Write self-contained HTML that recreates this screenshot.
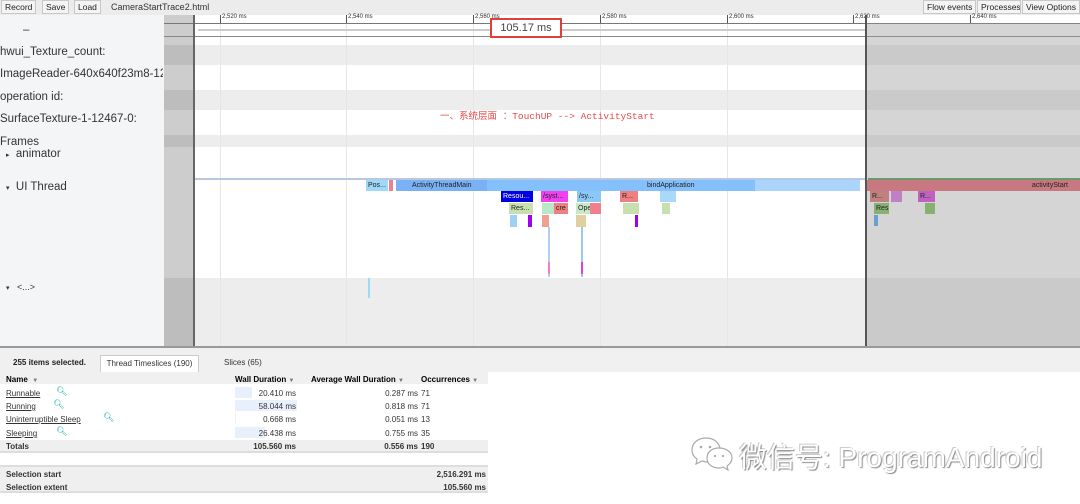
<!DOCTYPE html>
<html><head><meta charset="utf-8"><style>
*{margin:0;padding:0;box-sizing:border-box}
body{width:1080px;height:504px;overflow:hidden;background:#fff;font-family:"Liberation Sans",sans-serif;position:relative}
.a{position:absolute}
.btn{position:absolute;top:0;height:14px;border:1px solid #c8c8c8;background:#f4f4f4;font-size:8.5px;line-height:12px;padding:0 3px;color:#222;white-space:nowrap;overflow:hidden;text-align:center}
.lbl{position:absolute;left:0;font-size:11.5px;color:#333;white-space:nowrap}
.s{position:absolute;height:11px;font-size:7px;line-height:11px;color:#222;overflow:hidden;padding-left:2px;white-space:nowrap}
.v{position:absolute;width:2px}
.t{font-size:8px;color:#333;position:absolute}
.b{font-weight:bold}
</style></head><body>
<!-- toolbar -->
<div class="a" style="left:0;top:0;width:1080px;height:15px;background:#ececec"></div>
<div class="btn" style="left:1px">Record</div>
<div class="btn" style="left:42px">Save</div>
<div class="btn" style="left:74px">Load</div>
<div class="a" style="left:111px;top:2px;font-size:9px;color:#333">CameraStartTrace2.html</div>
<div class="btn" style="left:923px;width:53px">Flow events</div>
<div class="btn" style="left:977px;width:44px">Processes</div>
<div class="btn" style="left:1022px;width:58px">View Options</div>
<!-- left panel -->
<div class="a" style="left:0;top:15px;width:164px;height:332px;background:#f4f5f7"></div>
<div class="lbl" style="left:23px;top:24px">–</div>
<div class="lbl" style="top:46px">hwui_Texture_count:</div>
<div class="lbl" style="top:68px;width:163px;overflow:hidden">ImageReader-640x640f23m8-12</div>
<div class="lbl" style="top:91px">operation id:</div>
<div class="lbl" style="top:113px">SurfaceTexture-1-12467-0:</div>
<div class="lbl" style="top:136px">Frames</div>
<div class="lbl" style="left:6px;top:148px"><span style="font-size:7px">▸</span>&nbsp; animator</div>
<div class="lbl" style="left:6px;top:181px"><span style="font-size:7px">▾</span>&nbsp; UI Thread</div>
<div class="lbl" style="left:6px;top:282px;font-size:9px"><span style="font-size:7px">▾</span>&nbsp;&nbsp; &lt;...&gt;</div>
<!-- timeline bg -->
<div class="a" style="left:164px;top:15px;width:30px;height:332px;background:#cdcdcd"></div>
<div class="a" style="left:164px;top:278px;width:30px;height:69px;background:#bdbdbd"></div>
<div class="a" style="left:194px;top:15px;width:886px;height:21px;background:#fff"></div>
<div class="a" style="left:194px;top:45px;width:886px;height:20px;background:#ededed"></div>
<div class="a" style="left:194px;top:90px;width:886px;height:20px;background:#ededed"></div>
<div class="a" style="left:194px;top:135px;width:886px;height:12px;background:#ededed"></div>
<div class="a" style="left:194px;top:278px;width:886px;height:69px;background:#ededed"></div>
<div class="a" style="left:164px;top:45px;width:30px;height:20px;background:#bdbdbd"></div>
<div class="a" style="left:164px;top:90px;width:30px;height:20px;background:#bdbdbd"></div>
<div class="a" style="left:164px;top:135px;width:30px;height:12px;background:#bdbdbd"></div>
<!-- grid lines -->
<div class="a" style="left:220px;top:15px;width:1px;height:332px;background:#e6e6e6"></div>
<div class="a" style="left:346px;top:15px;width:1px;height:332px;background:#e6e6e6"></div>
<div class="a" style="left:473px;top:15px;width:1px;height:332px;background:#e6e6e6"></div>
<div class="a" style="left:600px;top:15px;width:1px;height:332px;background:#e6e6e6"></div>
<div class="a" style="left:727px;top:15px;width:1px;height:332px;background:#e6e6e6"></div>
<!-- ruler -->
<div class="a" style="left:164px;top:23px;width:916px;height:1px;background:#777"></div>
<div class="a" style="left:164px;top:36px;width:916px;height:1px;background:#888"></div>
<div class="a" style="left:198px;top:29px;width:668px;height:2px;background:#ccc"></div>
<div class="t" style="left:222px;top:14px;font-size:6px">2,520 ms</div>
<div class="t" style="left:348px;top:14px;font-size:6px">2,540 ms</div>
<div class="t" style="left:475px;top:14px;font-size:6px">2,560 ms</div>
<div class="t" style="left:602px;top:14px;font-size:6px">2,580 ms</div>
<div class="t" style="left:729px;top:14px;font-size:6px">2,600 ms</div>
<div class="t" style="left:855px;top:14px;font-size:6px">2,620 ms</div>
<div class="t" style="left:972px;top:14px;font-size:6px">2,640 ms</div>
<div class="a" style="left:220px;top:15px;width:1px;height:8px;background:#555"></div>
<div class="a" style="left:346px;top:15px;width:1px;height:8px;background:#555"></div>
<div class="a" style="left:473px;top:15px;width:1px;height:8px;background:#555"></div>
<div class="a" style="left:600px;top:15px;width:1px;height:8px;background:#555"></div>
<div class="a" style="left:727px;top:15px;width:1px;height:8px;background:#555"></div>
<div class="a" style="left:853px;top:15px;width:1px;height:8px;background:#555"></div>
<div class="a" style="left:970px;top:15px;width:1px;height:8px;background:#555"></div>
<div class="a" style="left:490px;top:18px;width:72px;height:20px;border:2px solid #e0403a;background:#fff;font-size:11px;color:#444;text-align:center;line-height:16px">105.17 ms</div>
<!-- red annotation -->
<div class="a" style="left:440px;top:108px;font-size:9.5px;color:#e84a4a;font-family:'Liberation Mono','Noto Sans CJK SC',monospace">一、系统层面 ：TouchUP --&gt; ActivityStart</div>
<!-- thread strip -->
<div class="a" style="left:194px;top:178px;width:672px;height:2px;background:#b8c8e0"></div>
<!-- slices -->
<div class="s" style="left:366px;top:180px;width:22px;background:#9fd8f8">Pos...</div>
<div class="s" style="left:389px;top:180px;width:4px;background:#f08090"></div>
<div class="s" style="left:396px;top:180px;width:91px;background:#7ab0f4;padding-left:16px">ActivityThreadMain</div>
<div class="s" style="left:487px;top:180px;width:373px;background:#84c0fb;padding-left:160px">bindApplication</div>
<div class="s" style="left:755px;top:180px;width:105px;background:#aad4fc"></div>
<div class="s" style="left:501px;top:191px;width:32px;background:#0000e0;color:#fff">Resou...</div>
<div class="s" style="left:541px;top:191px;width:27px;background:#f040f0">/syst...</div>
<div class="s" style="left:577px;top:191px;width:24px;background:#8ac8f8">/sy...</div>
<div class="s" style="left:620px;top:191px;width:18px;background:#f08080">R...</div>
<div class="s" style="left:660px;top:191px;width:16px;background:#aad8f8"></div>
<div class="s" style="left:509px;top:203px;width:24px;background:#c8e0b0">Res...</div>
<div class="s" style="left:542px;top:203px;width:12px;background:#b8e8c8"></div>
<div class="s" style="left:554px;top:203px;width:14px;background:#f08080">cre</div>
<div class="s" style="left:576px;top:203px;width:14px;background:#c8e8c8">Ope</div>
<div class="s" style="left:590px;top:203px;width:11px;background:#f08090"></div>
<div class="s" style="left:623px;top:203px;width:16px;background:#c8e0b0"></div>
<div class="s" style="left:662px;top:203px;width:8px;background:#c8e0b0"></div>
<div class="v" style="left:510px;top:215px;width:7px;height:12px;background:#9fd0f8"></div>
<div class="v" style="left:528px;top:215px;width:4px;height:12px;background:#a000f0"></div>
<div class="v" style="left:542px;top:215px;width:7px;height:12px;background:#f0a090"></div>
<div class="v" style="left:576px;top:215px;width:10px;height:12px;background:#e0d0a0"></div>
<div class="v" style="left:635px;top:215px;width:3px;height:12px;background:#a000f0"></div>
<div class="v" style="left:548px;top:227px;height:50px;background:#b0d0f0"></div>
<div class="v" style="left:548px;top:262px;height:12px;background:#f080c0"></div>
<div class="v" style="left:581px;top:227px;height:50px;background:#9cc8f0"></div>
<div class="v" style="left:581px;top:262px;height:12px;background:#e040e0"></div>
<div class="v" style="left:368px;top:278px;height:20px;background:#9fd8f8"></div>
<!-- right overlay -->
<div class="a" style="left:866px;top:23px;width:214px;height:324px;background:rgba(150,150,150,.4)"></div>
<div class="a" style="left:865px;top:15px;width:2px;height:332px;background:#555"></div>
<div class="a" style="left:193px;top:15px;width:2px;height:332px;background:#666"></div>
<div class="a" style="left:868px;top:178px;width:212px;height:2px;background:#6a9a6a"></div>
<div class="s" style="left:867px;top:180px;width:213px;background:#c87880;text-align:right;padding-right:12px">activityStart</div>
<div class="s" style="left:870px;top:191px;width:19px;background:#c08080">R...</div>
<div class="s" style="left:891px;top:191px;width:11px;background:#c080c8"></div>
<div class="s" style="left:918px;top:191px;width:17px;background:#c060c0">R...</div>
<div class="s" style="left:874px;top:203px;width:15px;background:#88b070">Res</div>
<div class="s" style="left:925px;top:203px;width:10px;background:#88b070"></div>
<div class="v" style="left:874px;top:215px;width:4px;height:11px;background:#6aa0d0"></div>
<!-- bottom panel -->
<div class="a" style="left:0;top:346px;width:1080px;height:2px;background:#999"></div>
<div class="a" style="left:0;top:348px;width:1080px;height:24px;background:#f0f0f0"></div>
<div class="a b" style="left:13px;top:358px;font-size:8px;color:#222">255 items selected.</div>
<div class="a" style="left:100px;top:355px;width:99px;height:17px;background:#fff;border:1px solid #ccc;border-bottom:none;font-size:8px;color:#333;text-align:center;line-height:15px">Thread Timeslices (190)</div>
<div class="a" style="left:224px;top:358px;font-size:8px;color:#333">Slices (65)</div>
<div class="a" style="left:0;top:372px;width:488px;height:12px;background:#f0f0f0"></div>
<div class="a b" style="left:6px;top:375px;font-size:8px">Name &nbsp;<span style="font-weight:normal;font-size:6px;color:#777">▼</span></div>
<div class="a b" style="left:235px;top:375px;font-size:8px">Wall Duration <span style="font-weight:normal;font-size:6px;color:#777">▼</span></div>
<div class="a b" style="left:311px;top:375px;font-size:8px">Average Wall Duration <span style="font-weight:normal;font-size:6px;color:#777">▼</span></div>
<div class="a b" style="left:421px;top:375px;font-size:8px">Occurrences <span style="font-weight:normal;font-size:6px;color:#777">▼</span></div>
<div class="a" style="left:235px;top:387px;width:17px;height:11px;background:#e8f0fc"></div>
<div class="a" style="left:235px;top:400px;width:62px;height:11px;background:#e8f0fc"></div>
<div class="a" style="left:235px;top:413px;width:1px;height:11px;background:#e8f0fc"></div>
<div class="a" style="left:235px;top:427px;width:30px;height:11px;background:#e8f0fc"></div>
<div class="t" style="left:6px;top:389px;text-decoration:underline">Runnable</div><div class="t" style="left:56px;top:386px;color:#0aa;font-size:9px">🔍︎</div>
<div class="t" style="left:6px;top:402px;text-decoration:underline">Running</div><div class="t" style="left:53px;top:399px;color:#0aa;font-size:9px">🔍︎</div>
<div class="t" style="left:6px;top:415px;text-decoration:underline">Uninterruptible Sleep</div><div class="t" style="left:103px;top:412px;color:#0aa;font-size:9px">🔍︎</div>
<div class="t" style="left:6px;top:429px;text-decoration:underline">Sleeping</div><div class="t" style="left:56px;top:426px;color:#0aa;font-size:9px">🔍︎</div>
<div class="t" style="left:236px;top:389px;width:60px;text-align:right">20.410 ms</div>
<div class="t" style="left:236px;top:402px;width:60px;text-align:right">58.044 ms</div>
<div class="t" style="left:236px;top:415px;width:60px;text-align:right">0.668 ms</div>
<div class="t" style="left:236px;top:429px;width:60px;text-align:right">26.438 ms</div>
<div class="t" style="left:360px;top:389px;width:58px;text-align:right">0.287 ms</div>
<div class="t" style="left:360px;top:402px;width:58px;text-align:right">0.818 ms</div>
<div class="t" style="left:360px;top:415px;width:58px;text-align:right">0.051 ms</div>
<div class="t" style="left:360px;top:429px;width:58px;text-align:right">0.755 ms</div>
<div class="t" style="left:421px;top:389px">71</div><div class="t" style="left:421px;top:402px">71</div><div class="t" style="left:421px;top:415px">13</div><div class="t" style="left:421px;top:429px">35</div>
<div class="a" style="left:0;top:440px;width:488px;height:13px;background:#efefef;border-bottom:2px solid #ddd"></div>
<div class="t b" style="left:6px;top:442px">Totals</div>
<div class="t b" style="left:230px;top:442px;width:66px;text-align:right">105.560 ms</div>
<div class="t b" style="left:360px;top:442px;width:58px;text-align:right">0.556 ms</div>
<div class="t b" style="left:421px;top:442px">190</div>
<div class="a" style="left:0;top:465px;width:488px;height:28px;background:#efefef;border-top:2px solid #ddd;border-bottom:2px solid #ddd"></div>
<div class="t b" style="left:6px;top:470px">Selection start</div>
<div class="t b" style="left:400px;top:470px;width:86px;text-align:right">2,516.291 ms</div>
<div class="t b" style="left:6px;top:483px">Selection extent</div>
<div class="t b" style="left:400px;top:483px;width:86px;text-align:right">105.560 ms</div>
<!-- watermark -->
<svg class="a" style="left:690px;top:434px" width="46" height="40" viewBox="0 0 46 40"><g fill="#fff" stroke="#aaa" stroke-width="1.2"><path d="M16 4C8 4 2 9 2 16c0 4 2 7 5 9l-1 5 6-3c1 0 3 1 4 1 8 0 14-5 14-12S24 4 16 4z"/><path d="M29 14c-7 0-12 4-12 10s5 10 12 10c1 0 3 0 4-1l5 3-1-4c3-2 5-5 5-8 0-6-6-10-13-10z"/></g><g fill="#aaa"><circle cx="11" cy="13" r="1.3"/><circle cx="20" cy="13" r="1.3"/><circle cx="25" cy="22" r="1.1"/><circle cx="33" cy="22" r="1.1"/></g></svg>
<div class="a" style="left:739px;top:436px;font-size:28px;color:#fff;text-shadow:1px 1px 1px #888,-1px -1px 0 #ccc;font-family:'Liberation Sans','Noto Sans CJK SC',sans-serif">微信号: ProgramAndroid</div>
</body></html>
